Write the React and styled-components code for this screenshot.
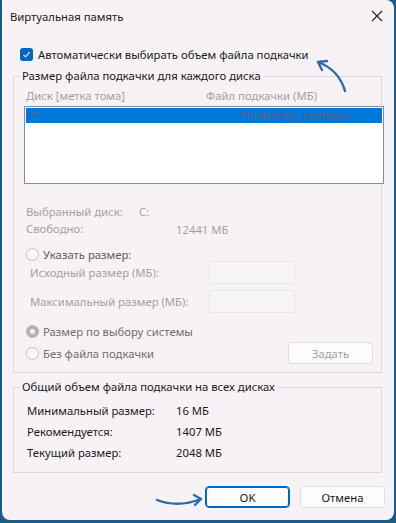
import React from "react";
import styled, { createGlobalStyle } from "styled-components";

const GlobalStyle = createGlobalStyle`
  html, body {
    margin: 0;
    padding: 0;
    background: #1d5a8c;
  }
  body {
    font-family: "Segoe UI", "Noto Sans", sans-serif;
    font-size: 11.3px;
  }
`;

const Window = styled.div`
  position: relative;
  box-sizing: border-box;
  width: 392px;
  height: 520px;
  margin: 0 2px 3px 2px;
  background: #f7f2f5;
  border-radius: 0 8px 8px 8px;
  display: flex;
  flex-direction: column;
  color: #1a1a1a;
`;

const TitleBar = styled.div`
  height: 32px;
  display: flex;
  align-items: center;
  justify-content: space-between;
  padding: 0 8px 0 8px;
`;

const Title = styled.span`
  color: #1a1a1a;
`;

const Close = styled.span`
  width: 14px;
  height: 14px;
  margin-right: 2px;
  display: flex;
`;

const Content = styled.div`
  padding: 0 12px 0 11px;
  display: flex;
  flex-direction: column;
`;

const CheckRow = styled.label`
  display: flex;
  align-items: center;
  height: 13px;
  margin: 16px 0 0 7px;
  gap: 5px;
  color: #1a1a1a;
`;

const CheckBox = styled.span`
  width: 13px;
  height: 13px;
  border-radius: 3px;
  background: #0067c0;
  display: flex;
  align-items: center;
  justify-content: center;
`;

const Group = styled.fieldset`
  margin: ${(p) => p.$top}px 0 0 0;
  padding: ${(p) => p.$pad};
  border: 1px solid #dcd9dc;
  border-radius: 0;
  min-width: 0;
  display: flex;
  flex-direction: column;
`;

const Legend = styled.legend`
  padding: 0 2px;
  margin-left: ${(p) => p.$shift}px;
  line-height: 16px;
  color: #1a1a1a;
`;

const Headers = styled.div`
  display: grid;
  grid-template-columns: 180px 1fr;
  height: 16px;
  line-height: 16px;
  padding-left: 2px;
  margin-top: 4px;
  color: #a3a1a4;
`;

const ListBox = styled.div`
  box-sizing: border-box;
  height: 78px;
  margin: 2px -3px 0 0;
  border: 1px solid #8c8a96;
  background: #ffffff;
  padding: 1px;
`;

const ListRow = styled.div`
  height: 15px;
  line-height: 15px;
  display: grid;
  grid-template-columns: 212px 1fr;
  padding-left: 3px;
  background: ${(p) => (p.$selected ? "#0078d7" : "transparent")};
  color: ${(p) => (p.$selected ? "#55628a" : "#1a1a1a")};
`;

const InfoRow = styled.div`
  display: grid;
  grid-template-columns: ${(p) => p.$label}px 1fr;
  height: ${(p) => p.$h || 16}px;
  line-height: ${(p) => p.$h || 16}px;
  margin-top: ${(p) => p.$top || 0}px;
  padding-left: ${(p) => p.$indent || 2}px;
  color: ${(p) => (p.$dark ? "#1a1a1a" : "#a3a1a4")};
`;

const Value = styled.span`
  position: relative;
  top: ${(p) => p.$shift || 0}px;
`;

const RadioRow = styled.div`
  display: flex;
  align-items: center;
  justify-content: space-between;
  height: ${(p) => p.$h || 16}px;
  margin-top: ${(p) => p.$top || 0}px;
  padding-left: 2px;
`;

const RadioLabel = styled.span`
  display: flex;
  align-items: center;
  gap: 4px;
  color: ${(p) => p.$color};
`;

const Radio = styled.span`
  box-sizing: border-box;
  width: 13px;
  height: 13px;
  border-radius: 50%;
  border: 1px solid ${(p) => (p.$checked ? "#b4b2b5" : "#c6c4c7")};
  background: ${(p) => (p.$checked ? "#b4b2b5" : "#fbf9fb")};
  display: flex;
  align-items: center;
  justify-content: center;
  &::after {
    content: "";
    width: 5px;
    height: 5px;
    border-radius: 50%;
    background: ${(p) => (p.$checked ? "#f4f2f4" : "transparent")};
  }
`;

const FieldRow = styled.div`
  display: grid;
  grid-template-columns: 179px 86px;
  align-items: center;
  height: 23px;
  margin-top: ${(p) => p.$top}px;
  padding-left: 6px;
  color: #a3a1a4;
`;

const Field = styled.span`
  box-sizing: border-box;
  height: 23px;
  border: 1px solid #e8e5e8;
  background: #f8f5f8;
  border-radius: 2px;
`;

const Button = styled.button`
  box-sizing: border-box;
  width: ${(p) => p.$w || 85}px;
  height: 22px;
  border-radius: 4px;
  border: 1px solid ${(p) => (p.$primary ? "#0067c0" : "#e0dde0")};
  box-shadow: ${(p) => (p.$primary ? "inset 0 0 0 1px #0067c0" : "none")};
  background: #fdfcfd;
  font-family: inherit;
  font-size: 11.3px;
  color: ${(p) => (p.$disabled ? "#a3a1a4" : "#1a1a1a")};
  padding: 0;
`;

const Footer = styled.div`
  display: flex;
  justify-content: flex-end;
  gap: 10px;
  margin: 13px -3px 0 0;
`;

const Annotation = styled.svg`
  position: absolute;
  left: 0;
  top: 0;
  pointer-events: none;
`;

export default function App() {
  return (
    <>
      <GlobalStyle />
      <Window>
        <TitleBar>
          <Title>Виртуальная память</Title>
          <Close>
            <svg width="14" height="14" viewBox="0 0 14 14">
              <path d="M2 2 L12 12 M12 2 L2 12" stroke="#222" strokeWidth="1.1" />
            </svg>
          </Close>
        </TitleBar>
        <Content>
          <CheckRow>
            <CheckBox>
              <svg width="9" height="9" viewBox="0 0 9 9">
                <path d="M1.5 4.8 L3.6 6.8 L7.6 2.2" stroke="#fff" strokeWidth="1.1" fill="none" />
              </svg>
            </CheckBox>
            Автоматически выбирать объем файла подкачки
          </CheckRow>

          <Group $top={7} $pad="0 0 8px 10px">
            <Legend $shift={-4}>Размер файла подкачки для каждого диска</Legend>
            <Headers>
              <span>Диск [метка тома]</span>
              <span>Файл подкачки (МБ)</span>
            </Headers>
            <ListBox>
              <ListRow $selected>
                <span>C:</span>
                <span>По выбору системы</span>
              </ListRow>
            </ListBox>
            <InfoRow $label={113} $top={20}>
              <span>Выбранный диск:</span>
              <span>C:</span>
            </InfoRow>
            <InfoRow $label={150} $top={1}>
              <span>Свободно:</span>
              <Value $shift={1}>12441 МБ</Value>
            </InfoRow>
            <RadioRow $top={9}>
              <RadioLabel $color="#5f5d60">
                <Radio />
                Указать размер:
              </RadioLabel>
            </RadioRow>
            <FieldRow $top={-1}>
              <span>Исходный размер (МБ):</span>
              <Field />
            </FieldRow>
            <FieldRow $top={6}>
              <span>Максимальный размер (МБ):</span>
              <Field />
            </FieldRow>
            <RadioRow $top={10}>
              <RadioLabel $color="#6f6d70">
                <Radio $checked />
                Размер по выбору системы
              </RadioLabel>
            </RadioRow>
            <RadioRow $top={3} $h={22}>
              <RadioLabel $color="#6f6d70">
                <Radio />
                Без файла подкачки
              </RadioLabel>
              <Button $w={85} $disabled style={{ marginRight: 8 }}>
                Задать
              </Button>
            </RadioRow>
          </Group>

          <Group $top={6} $pad="0 0 9px 11px">
            <Legend $shift={-5}>Общий объем файла подкачки на всех дисках</Legend>
            <InfoRow $dark $label={149} $h={21} $top={5}>
              <span>Минимальный размер:</span>
              <span>16 МБ</span>
            </InfoRow>
            <InfoRow $dark $label={149} $h={21}>
              <span>Рекомендуется:</span>
              <span>1407 МБ</span>
            </InfoRow>
            <InfoRow $dark $label={149} $h={21}>
              <span>Текущий размер:</span>
              <span>2048 МБ</span>
            </InfoRow>
          </Group>

          <Footer>
            <Button $primary>OK</Button>
            <Button>Отмена</Button>
          </Footer>
        </Content>

        <Annotation width="392" height="520" viewBox="0 0 392 520">
          <g stroke="#2b6cb0" strokeWidth="2.4" fill="none" strokeLinecap="round" strokeLinejoin="round">
            <path d="M343 91 Q337 70 316 62" />
            <path d="M316 62 L325 61 M316 62 L320 70" />
            <path d="M155 500 Q176 508 199 499" />
            <path d="M199 499 L192 495 M199 499 L193 505" />
          </g>
        </Annotation>
      </Window>
    </>
  );
}
